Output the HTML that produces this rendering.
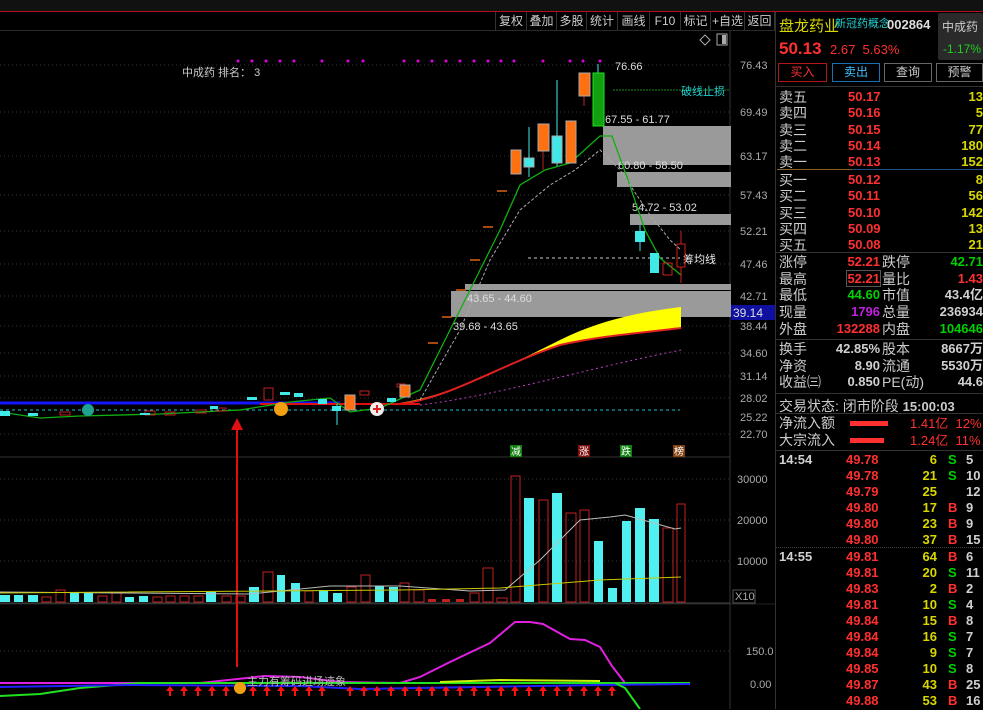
<!DOCTYPE html>
<html><head><meta charset="utf-8"><style>
*{margin:0;padding:0;box-sizing:border-box}
body{width:983px;height:709px;background:#000;overflow:hidden;position:relative;font-family:"Liberation Sans","Noto Sans CJK SC",sans-serif;color:#c8c8c8}
.a{position:absolute;white-space:nowrap}
.tb{position:absolute;top:12px;height:18px;font-size:12px;color:#ccc;text-align:center;line-height:18px;border-right:1px solid #333}
.r{font-size:13px;line-height:16px}
.red{color:#ff3030}.yel{color:#d8d800}.grn{color:#00d000}.wht{color:#d0d0d0}
</style></head><body>
<div class="a" style="left:0;top:0;width:983px;height:11px;background:#111"></div>
<div class="a" style="left:0;top:11px;width:983px;height:1px;background:#b01020"></div>
<div class="a" style="left:0;top:30px;width:775px;height:1px;background:#2a2a2a"></div>
<div class="tb" style="left:495px;width:32px;border-left:1px solid #333">复权</div>
<div class="tb" style="left:527px;width:30px">叠加</div>
<div class="tb" style="left:557px;width:30px">多股</div>
<div class="tb" style="left:587px;width:31px">统计</div>
<div class="tb" style="left:618px;width:32px">画线</div>
<div class="tb" style="left:650px;width:31px">F10</div>
<div class="tb" style="left:681px;width:30px">标记</div>
<div class="tb" style="left:711px;width:34px">+自选</div>
<div class="tb" style="left:745px;width:30px">返回</div>

<svg class="a" style="left:0;top:0" width="775" height="709">
<g stroke="#333" stroke-dasharray="1,3" stroke-width="1">
<line x1="0" y1="65" x2="730" y2="65"/><line x1="0" y1="112" x2="730" y2="112"/><line x1="0" y1="156" x2="730" y2="156"/><line x1="0" y1="195" x2="730" y2="195"/><line x1="0" y1="231" x2="730" y2="231"/><line x1="0" y1="264" x2="730" y2="264"/><line x1="0" y1="296" x2="730" y2="296"/><line x1="0" y1="326" x2="730" y2="326"/><line x1="0" y1="353" x2="730" y2="353"/><line x1="0" y1="376" x2="730" y2="376"/><line x1="0" y1="398" x2="730" y2="398"/><line x1="0" y1="434" x2="730" y2="434"/>
<line x1="0" y1="479" x2="730" y2="479"/><line x1="0" y1="520" x2="730" y2="520"/><line x1="0" y1="561" x2="730" y2="561"/><line x1="0" y1="651" x2="730" y2="651"/>
</g>
<line x1="730" y1="31" x2="730" y2="709" stroke="#333"/>
<line x1="0" y1="457" x2="730" y2="457" stroke="#333"/>
<line x1="0" y1="603" x2="730" y2="603" stroke="#444"/>
<line x1="0" y1="604" x2="775" y2="604" stroke="#222"/>
<g font-size="11" fill="#aaa" font-family="Liberation Sans">
<text x="740" y="69">76.43</text><text x="740" y="116">69.49</text><text x="740" y="160">63.17</text><text x="740" y="199">57.43</text><text x="740" y="235">52.21</text><text x="740" y="268">47.46</text><text x="740" y="300">42.71</text><text x="740" y="330">38.44</text><text x="740" y="357">34.60</text><text x="740" y="380">31.14</text><text x="740" y="402">28.02</text><text x="740" y="421">25.22</text><text x="740" y="438">22.70</text>
<text x="737" y="483">30000</text><text x="737" y="524">20000</text><text x="737" y="565">10000</text><text x="746" y="655">150.0</text><text x="750" y="688">0.00</text>
</g>
<rect x="733" y="590" width="22" height="13" fill="none" stroke="#555"/><text x="735" y="600" font-size="11" fill="#aaa">X10</text>
<rect x="731" y="305" width="44" height="15" fill="#1010a0"/><text x="733" y="317" font-size="12" fill="#ddd">39.14</text>
<path d="M705 35l5 5-5 5-5-5z" fill="none" stroke="#aaa"/><rect x="717" y="34" width="10" height="11" fill="none" stroke="#aaa"/><rect x="722" y="35" width="4" height="9" fill="#aaa"/>
<g fill="#e000e0">
<circle cx="238" cy="61" r="1.5"/><circle cx="252" cy="61" r="1.5"/><circle cx="266" cy="61" r="1.5"/><circle cx="280" cy="61" r="1.5"/><circle cx="294" cy="61" r="1.5"/><circle cx="322" cy="61" r="1.5"/><circle cx="348" cy="61" r="1.5"/><circle cx="363" cy="61" r="1.5"/><circle cx="404" cy="61" r="1.5"/><circle cx="418" cy="61" r="1.5"/><circle cx="432" cy="61" r="1.5"/><circle cx="446" cy="61" r="1.5"/><circle cx="460" cy="61" r="1.5"/><circle cx="474" cy="61" r="1.5"/><circle cx="488" cy="61" r="1.5"/><circle cx="501" cy="61" r="1.5"/><circle cx="514" cy="61" r="1.5"/><circle cx="543" cy="61" r="1.5"/><circle cx="570" cy="61" r="1.5"/><circle cx="583" cy="61" r="1.5"/><circle cx="600" cy="61" r="1.5"/>
</g>
<text x="182" y="76" font-size="11" fill="#ccc">中成药 排名： 3</text>
<!-- gray boxes -->
<g fill="#9a9a9a">
<rect x="603" y="126" width="128" height="39"/><rect x="617" y="172" width="114" height="15"/><rect x="630" y="214" width="101" height="11"/><rect x="465" y="284" width="266" height="6"/><rect x="451" y="291" width="280" height="26"/>
</g>
<g font-size="11" fill="#ddd"><text x="605" y="123">67.55 - 61.77</text><text x="618" y="169">60.80 - 58.50</text><text x="632" y="211">54.72 - 53.02</text><text x="467" y="302">43.65 - 44.60</text><text x="453" y="330">39.68 - 43.65</text><text x="615" y="70">76.66</text></g>
<line x1="613" y1="90" x2="730" y2="90" stroke="#1a8a1a" stroke-dasharray="2,1"/>
<text x="681" y="95" font-size="11" fill="#20d0d0">破线止损</text>
<line x1="528" y1="258" x2="680" y2="258" stroke="#ccc" stroke-dasharray="3,3"/>
<text x="683" y="263" font-size="11" fill="#eee">筹均线</text>
<!-- yellow band -->
<path d="M400 403 C450 395 500 370 560 340 C600 320 640 312 681 307 L681 328 C640 333 600 336 560 345 C500 365 450 398 400 404Z" fill="#ffff00"/>
<path d="M400 404 C450 398 500 365 560 345 C600 336 640 333 681 328" fill="none" stroke="#e02020" stroke-width="2"/>
<path d="M420 405 C500 395 580 370 681 350" fill="none" stroke="#c040c0" stroke-dasharray="2,3"/>
<!-- flat lines -->
<line x1="0" y1="410" x2="680" y2="410" stroke="#20c0d0" stroke-dasharray="3,3"/>
<line x1="0" y1="403" x2="340" y2="403" stroke="#1515ff" stroke-width="3"/>
<line x1="260" y1="404" x2="420" y2="404" stroke="#e01010" stroke-width="2"/>
<path d="M0 412 L40 418 L80 416 L160 414 L240 410 L290 402 L330 398 L350 412 L380 408 L420 390 L440 350 L470 290 L500 230 L520 185 L545 170 L570 163 L600 136 L612 136 L628 180 L645 230 L660 258 L681 275" fill="none" stroke="#10b010" stroke-width="1.3"/>
<path d="M420 400 L460 330 L490 260 L520 210 L550 185 L575 170 L600 150 L620 170 L650 215 L670 240 L681 250" fill="none" stroke="#aaa" stroke-dasharray="3,2"/>
<!-- small candles left -->
<g fill="none" stroke="#c02020">
<rect x="60" y="412" width="10" height="3"/><rect x="145" y="411" width="10" height="4"/><rect x="165" y="412" width="10" height="3"/><rect x="196" y="410" width="10" height="3"/><rect x="216" y="408" width="10" height="3"/><rect x="264" y="388" width="9" height="12"/><rect x="360" y="391" width="9" height="4"/><rect x="397" y="384" width="8" height="3"/>
</g>
<g fill="#40e8e8">
<rect x="0" y="411" width="10" height="5"/><rect x="28" y="413" width="10" height="3"/><rect x="140" y="413" width="10" height="2"/><rect x="210" y="406" width="8" height="3"/><rect x="247" y="397" width="10" height="3"/><rect x="280" y="392" width="10" height="3"/><rect x="294" y="393" width="9" height="4"/><rect x="318" y="399" width="9" height="5"/><rect x="332" y="406" width="9" height="5"/><rect x="387" y="398" width="9" height="4"/>
</g>
<rect x="345" y="395" width="10" height="15" fill="#ff7010" stroke="#aaa"/><rect x="400" y="385" width="10" height="12" fill="#ff7010" stroke="#aaa"/>
<line x1="337" y1="404" x2="337" y2="425" stroke="#40e8e8"/>
<circle cx="88" cy="410" r="6" fill="#20a090"/><circle cx="281" cy="409" r="7" fill="#f0a010"/><circle cx="377" cy="409" r="7" fill="#eee"/><path d="M373 409h8M377 405v8" stroke="#e02020" stroke-width="2"/>
<!-- dash marks -->
<g stroke="#e06010" stroke-width="1.5"><line x1="497" y1="191" x2="507" y2="191"/><line x1="483" y1="227" x2="493" y2="227"/><line x1="470" y1="260" x2="480" y2="260"/><line x1="456" y1="290" x2="466" y2="290"/><line x1="442" y1="317" x2="452" y2="317"/><line x1="428" y1="343" x2="438" y2="343"/></g>
<!-- big candles -->
<g stroke="#aaa"><line x1="529" y1="127" x2="529" y2="177" stroke="#40e8e8"/><line x1="557" y1="80" x2="557" y2="166" stroke="#40e8e8"/><line x1="543" y1="150" x2="543" y2="170" stroke="#c02020"/><line x1="584" y1="96" x2="584" y2="106" stroke="#c02020"/><line x1="640" y1="225" x2="640" y2="251" stroke="#40e8e8"/>
<rect x="511" y="150" width="10" height="24" fill="#ff7010"/><rect x="524" y="158" width="10" height="9" fill="#40e8e8"/><rect x="538" y="124" width="11" height="27" fill="#ff7010"/><rect x="552" y="136" width="10" height="27" fill="#40e8e8"/><rect x="566" y="121" width="10" height="42" fill="#ff7010"/><rect x="579" y="73" width="11" height="23" fill="#ff7010"/></g>
<line x1="598" y1="64" x2="598" y2="73" stroke="#40e8e8"/>
<rect x="593" y="73" width="11" height="53" fill="#10a010" stroke="#20e020"/>
<rect x="635" y="231" width="10" height="11" fill="#40e8e8"/><rect x="650" y="253" width="9" height="20" fill="#40e8e8"/>
<g fill="none" stroke="#d02020"><rect x="663" y="263" width="9" height="12"/><rect x="677" y="244" width="8" height="23"/><line x1="681" y1="231" x2="681" y2="244"/><line x1="681" y1="267" x2="681" y2="283"/></g>
<!-- red arrow -->
<line x1="237" y1="428" x2="237" y2="667" stroke="#e01010" stroke-width="2"/><path d="M231 430 L237 418 L243 430Z" fill="#e01010"/>
<!-- volume tags -->
<rect x="510" y="445" width="12" height="12" fill="#108010"/><text x="511" y="455" font-size="10" fill="#fff">减</text>
<rect x="578" y="445" width="12" height="12" fill="#801010"/><text x="579" y="455" font-size="10" fill="#fff">涨</text>
<rect x="620" y="445" width="12" height="12" fill="#108010"/><text x="621" y="455" font-size="10" fill="#fff">跌</text>
<rect x="673" y="445" width="12" height="12" fill="#804010"/><text x="674" y="455" font-size="10" fill="#fff">榜</text>
<!-- volume bars -->
<g fill="#50f0f0">
<rect x="0" y="595" width="10" height="7"/><rect x="14" y="595" width="9" height="7"/><rect x="28" y="595" width="10" height="7"/><rect x="70" y="593" width="9" height="9"/><rect x="84" y="593" width="9" height="9"/><rect x="125" y="597" width="9" height="5"/><rect x="139" y="596" width="9" height="6"/><rect x="206" y="592" width="10" height="10"/><rect x="249" y="587" width="10" height="15"/><rect x="277" y="575" width="8" height="27"/><rect x="291" y="583" width="9" height="19"/><rect x="319" y="590" width="9" height="12"/><rect x="333" y="593" width="9" height="9"/><rect x="375" y="586" width="9" height="16"/><rect x="389" y="587" width="9" height="15"/>
<rect x="524" y="498" width="10" height="104"/><rect x="552" y="493" width="10" height="109"/><rect x="594" y="541" width="9" height="61"/><rect x="608" y="588" width="9" height="14"/><rect x="622" y="521" width="9" height="81"/><rect x="635" y="508" width="10" height="94"/><rect x="649" y="519" width="10" height="83"/>
</g>
<g fill="none" stroke="#c02020">
<rect x="42" y="597" width="9" height="5"/><rect x="56" y="590" width="9" height="12"/><rect x="98" y="596" width="9" height="6"/><rect x="112" y="593" width="9" height="9"/><rect x="153" y="597" width="9" height="5"/><rect x="166" y="596" width="9" height="6"/><rect x="180" y="596" width="9" height="6"/><rect x="194" y="596" width="9" height="6"/><rect x="222" y="596" width="9" height="6"/><rect x="236" y="596" width="9" height="6"/><rect x="263" y="572" width="10" height="30"/><rect x="305" y="591" width="8" height="11"/><rect x="347" y="587" width="9" height="15"/><rect x="361" y="575" width="9" height="27"/>
<rect x="400" y="583" width="9" height="19"/><rect x="414" y="590" width="10" height="12"/><rect x="470" y="593" width="9" height="9"/><rect x="483" y="568" width="10" height="34"/><rect x="497" y="598" width="10" height="4"/><rect x="511" y="476" width="9" height="126"/><rect x="539" y="500" width="9" height="102"/><rect x="566" y="513" width="10" height="89"/><rect x="580" y="510" width="9" height="92"/><rect x="663" y="528" width="10" height="74"/><rect x="677" y="504" width="8" height="98"/>
</g>
<g fill="#c02020"><rect x="428" y="599" width="8" height="3"/><rect x="442" y="599" width="8" height="3"/><rect x="456" y="599" width="8" height="3"/></g>
<path d="M0 592 L120 593 L250 594 L330 586 L400 586 L470 591 L505 590 L540 560 L580 520 L610 517 L625 515 L650 522 L675 529 L681 528" fill="none" stroke="#bbb"/>
<path d="M0 593 L400 590 L500 588 L600 580 L681 577" fill="none" stroke="#c8c800"/>
<!-- indicator -->
<path d="M0 683 L200 683 L265 676 L300 677 L340 682 L400 683 L420 677 L450 662 L490 643 L515 622 L530 622 L543 624 L570 639 L585 640 L600 647 L612 666 L625 683" fill="none" stroke="#e020e0" stroke-width="2"/>
<path d="M0 696 L40 694 L80 688 L140 683 L690 683" fill="none" stroke="#20e020" stroke-width="2"/>
<path d="M0 687 L130 685 L300 686 L360 689 L600 685 L690 684" fill="none" stroke="#2020ff" stroke-width="2"/>
<path d="M440 682 L500 680 L600 681" fill="none" stroke="#d0f000" stroke-width="2"/>
<path d="M615 683 L625 688 L640 709" fill="none" stroke="#20e020" stroke-width="2"/>
<g fill="#ff1010">
<path d="M170 686l-4 5h3v5h2v-5h3z"/><path d="M184 686l-4 5h3v5h2v-5h3z"/><path d="M198 686l-4 5h3v5h2v-5h3z"/><path d="M212 686l-4 5h3v5h2v-5h3z"/><path d="M226 686l-4 5h3v5h2v-5h3z"/><path d="M253 686l-4 5h3v5h2v-5h3z"/><path d="M267 686l-4 5h3v5h2v-5h3z"/><path d="M281 686l-4 5h3v5h2v-5h3z"/><path d="M295 686l-4 5h3v5h2v-5h3z"/><path d="M309 686l-4 5h3v5h2v-5h3z"/><path d="M322 686l-4 5h3v5h2v-5h3z"/><path d="M350 686l-4 5h3v5h2v-5h3z"/><path d="M364 686l-4 5h3v5h2v-5h3z"/><path d="M377 686l-4 5h3v5h2v-5h3z"/><path d="M391 686l-4 5h3v5h2v-5h3z"/><path d="M405 686l-4 5h3v5h2v-5h3z"/><path d="M419 686l-4 5h3v5h2v-5h3z"/><path d="M432 686l-4 5h3v5h2v-5h3z"/><path d="M446 686l-4 5h3v5h2v-5h3z"/><path d="M460 686l-4 5h3v5h2v-5h3z"/><path d="M474 686l-4 5h3v5h2v-5h3z"/><path d="M488 686l-4 5h3v5h2v-5h3z"/><path d="M501 686l-4 5h3v5h2v-5h3z"/><path d="M515 686l-4 5h3v5h2v-5h3z"/><path d="M529 686l-4 5h3v5h2v-5h3z"/><path d="M543 686l-4 5h3v5h2v-5h3z"/><path d="M557 686l-4 5h3v5h2v-5h3z"/><path d="M570 686l-4 5h3v5h2v-5h3z"/><path d="M584 686l-4 5h3v5h2v-5h3z"/><path d="M598 686l-4 5h3v5h2v-5h3z"/><path d="M612 686l-4 5h3v5h2v-5h3z"/>
</g>
<circle cx="240" cy="688" r="6" fill="#f0a010"/>
<text x="247" y="685" font-size="11" fill="#bbb">主力有筹码进场迹象</text>
</svg>

<!-- right panel -->
<div class="a" style="left:775px;top:12px;width:1px;height:697px;background:#333"></div>
<div class="a" style="left:779px;top:15px;font-size:15px;color:#d8d800">盘龙药业</div>
<div class="a" style="left:835px;top:15px;font-size:11px;color:#20d0d0">新冠药概念</div>
<div class="a" style="left:887px;top:17px;font-size:13px;color:#ddd;font-weight:bold">002864</div>
<div class="a" style="left:938px;top:13px;width:45px;height:47px;background:#2a2a2a;border-radius:2px"></div>
<div class="a" style="left:942px;top:18px;font-size:12px;color:#ccc">中成药</div>
<div class="a" style="left:943px;top:42px;font-size:12px;color:#20d020">-1.17%</div>
<div class="a" style="left:779px;top:39px;font-size:17px;font-weight:bold;color:#ff3030">50.13</div>
<div class="a" style="left:830px;top:42px;font-size:13px;color:#ff3030">2.67&nbsp;&nbsp;5.63%</div>
<div class="a" style="left:778px;top:63px;width:49px;height:19px;border:1px solid #b01818;color:#ff3030;font-size:12px;text-align:center;line-height:17px">买入</div>
<div class="a" style="left:832px;top:63px;width:48px;height:19px;border:1px solid #1870b0;color:#40c0ff;font-size:12px;text-align:center;line-height:17px">卖出</div>
<div class="a" style="left:884px;top:63px;width:48px;height:19px;border:1px solid #666;color:#ccc;font-size:12px;text-align:center;line-height:17px">查询</div>
<div class="a" style="left:936px;top:63px;width:47px;height:19px;border:1px solid #666;color:#ccc;font-size:12px;text-align:center;line-height:17px">预警</div>
<div class="a" style="left:776px;top:86px;width:207px;height:1px;background:#333"></div>

<div class="a r" style="left:779px;top:89px;font-size:14px;line-height:16.3px;color:#ccc">卖五<br>卖四<br>卖三<br>卖二<br>卖一</div>
<div class="a r red" style="left:848px;top:89px;font-weight:bold;line-height:16.3px">50.17<br>50.16<br>50.15<br>50.14<br>50.13</div>
<div class="a r yel" style="left:930px;top:89px;width:53px;text-align:right;font-weight:bold;line-height:16.3px">13<br>5<br>77<br>180<br>152</div>
<div class="a" style="left:777px;top:169px;width:75px;height:1px;background:#8a6020"></div><div class="a" style="left:852px;top:169px;width:131px;height:1px;background:#205080"></div>
<div class="a r" style="left:779px;top:172px;font-size:14px;line-height:16.3px;color:#ccc">买一<br>买二<br>买三<br>买四<br>买五</div>
<div class="a r red" style="left:848px;top:172px;font-weight:bold;line-height:16.3px">50.12<br>50.11<br>50.10<br>50.09<br>50.08</div>
<div class="a r yel" style="left:930px;top:172px;width:53px;text-align:right;font-weight:bold;line-height:16.3px">8<br>56<br>142<br>13<br>21</div>
<div class="a" style="left:776px;top:252px;width:207px;height:1px;background:#333"></div>
<div class="a r" style="left:779px;top:254px;font-size:14px;line-height:16.7px;color:#ccc">涨停<br>最高<br>最低<br>现量<br>外盘</div>
<div class="a r" style="left:800px;top:254px;width:80px;text-align:right;font-weight:bold;line-height:16.7px"><span class="red">52.21</span><br><span class="red" style="outline:1px solid #555">52.21</span><br><span class="grn">44.60</span><br><span style="color:#c020e0">1796</span><br><span class="red">132288</span></div>
<div class="a r" style="left:882px;top:254px;font-size:14px;line-height:16.7px;color:#ccc">跌停<br>量比<br>市值<br>总量<br>内盘</div>
<div class="a r" style="left:920px;top:254px;width:63px;text-align:right;font-weight:bold;line-height:16.7px;overflow:hidden"><span class="grn">42.71</span><br><span class="red">1.43</span><br><span class="wht">43.4亿</span><br><span class="wht">236934</span><br><span class="grn">104646</span></div>
<div class="a" style="left:776px;top:339px;width:207px;height:1px;background:#333"></div>
<div class="a r" style="left:779px;top:341px;font-size:14px;line-height:16.7px;color:#ccc">换手<br>净资<br>收益㈢</div>
<div class="a r wht" style="left:800px;top:341px;width:80px;text-align:right;font-weight:bold;line-height:16.7px">42.85%<br>8.90<br>0.850</div>
<div class="a r" style="left:882px;top:341px;font-size:14px;line-height:16.7px;color:#ccc">股本<br>流通<br>PE(动)</div>
<div class="a r wht" style="left:920px;top:341px;width:63px;text-align:right;font-weight:bold;line-height:16.7px;overflow:hidden">8667万<br>5530万<br>44.6</div>
<div class="a" style="left:776px;top:393px;width:207px;height:1px;background:#333"></div>
<div class="a" style="left:779px;top:396px;font-size:14px;color:#ccc">交易状态: 闭市阶段 <b style="font-size:13px">15:00:03</b></div>
<div class="a" style="left:776px;top:413px;width:207px;height:1px;background:#333"></div>
<div class="a r" style="left:779px;top:415px;font-size:14px;line-height:17px;color:#ccc">净流入额<br>大宗流入</div>
<div class="a" style="left:850px;top:421px;width:38px;height:5px;background:#ff3030"></div>
<div class="a" style="left:850px;top:438px;width:34px;height:5px;background:#ff3030"></div>
<div class="a r red" style="left:910px;top:415px;line-height:17px">1.41亿&nbsp;&nbsp;12%<br>1.24亿&nbsp;&nbsp;11%</div>
<div class="a" style="left:776px;top:450px;width:207px;height:1px;background:#333"></div>
<div class="a" style="left:776px;top:547px;width:207px;height:1px;border-top:1px dotted #444"></div>
<div class="a r wht" style="left:779px;top:452px;font-weight:bold;line-height:16.1px">14:54<br><br><br><br><br><br>14:55</div>
<div class="a r red" style="left:846px;top:452px;font-weight:bold;line-height:16.1px">49.78<br>49.78<br>49.79<br>49.80<br>49.80<br>49.80<br>49.81<br>49.81<br>49.83<br>49.81<br>49.84<br>49.84<br>49.84<br>49.85<br>49.87<br>49.88</div>
<div class="a r yel" style="left:910px;top:452px;width:27px;text-align:right;font-weight:bold;line-height:16.1px">6<br>21<br>25<br>17<br>23<br>37<br>64<br>20<br>2<br>10<br>15<br>16<br>9<br>10<br>43<br>53</div>
<div class="a r" style="left:948px;top:452px;font-weight:bold;line-height:16.1px"><span class="grn">S</span><br><span class="grn">S</span><br>&nbsp;<br><span class="red">B</span><br><span class="red">B</span><br><span class="red">B</span><br><span class="red">B</span><br><span class="grn">S</span><br><span class="red">B</span><br><span class="grn">S</span><br><span class="red">B</span><br><span class="grn">S</span><br><span class="grn">S</span><br><span class="grn">S</span><br><span class="red">B</span><br><span class="red">B</span></div>
<div class="a r wht" style="left:966px;top:452px;font-weight:bold;line-height:16.1px">5<br>10<br>12<br>9<br>9<br>15<br>6<br>11<br>2<br>4<br>8<br>7<br>7<br>8<br>25<br>16</div>
</body></html>
